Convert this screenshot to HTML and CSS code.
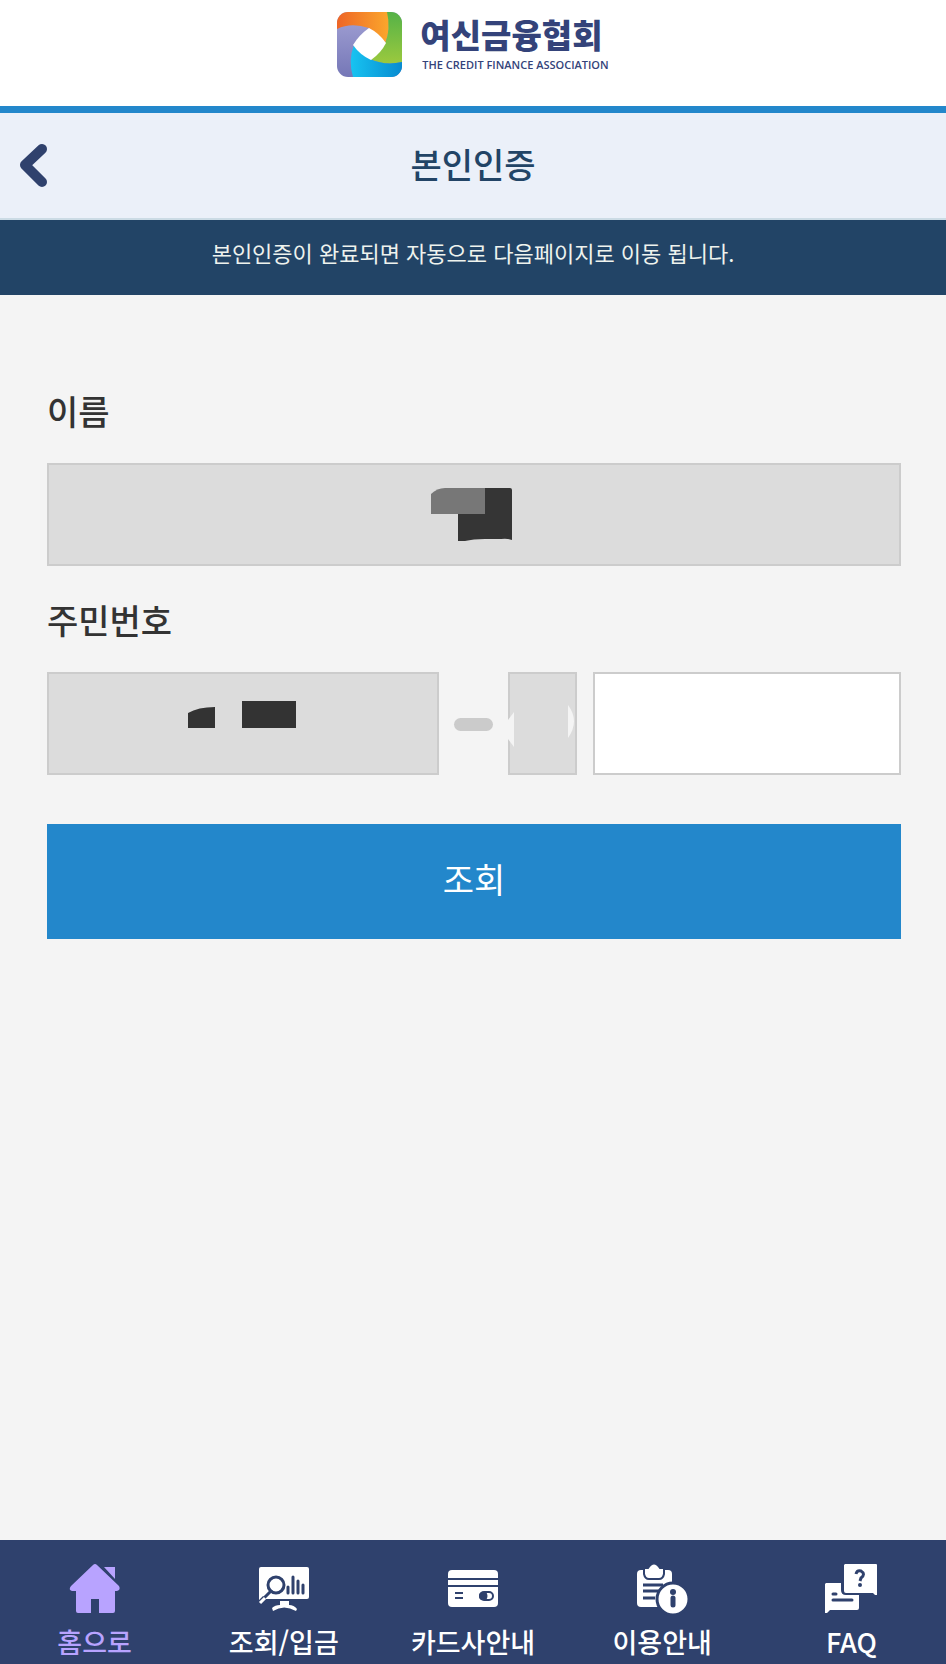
FILE: index.html
```html
<!DOCTYPE html>
<html lang="ko">
<head>
<meta charset="utf-8">
<meta name="viewport" content="width=device-width, initial-scale=1">
<title>본인인증 - 여신금융협회</title>
<link rel="stylesheet" href="styles.css">
</head>
<body>
<header class="site-header">
  <a class="brand" href="#">
    <svg class="brand-mark" viewBox="0 0 65 65" aria-hidden="true">
      <defs>
        <clipPath id="mark"><rect width="65" height="65" rx="11"/></clipPath>
        <linearGradient id="orange"><stop offset="0" stop-color="#ee6526"/><stop offset="1" stop-color="#fba72c"/></linearGradient>
        <linearGradient id="green" x2="0" y2="1"><stop offset="0" stop-color="#55b247"/><stop offset="1" stop-color="#9bc93e"/></linearGradient>
        <linearGradient id="blue"><stop offset="0" stop-color="#18c3f1"/><stop offset="1" stop-color="#078bd0"/></linearGradient>
        <linearGradient id="violet" x2="0" y2="1"><stop offset="0" stop-color="#a3a2d5"/><stop offset="1" stop-color="#7577b7"/></linearGradient>
      </defs>
      <g clip-path="url(#mark)">
        <rect width="65" height="65" fill="url(#violet)"/>
        <path d="M0 0H51Q54 17 48 32L32 16Q14 10 0 17Z" fill="url(#orange)"/>
        <path d="M50 0H65V50Q48 54 33 47L48 32Q54 17 50 0Z" fill="url(#green)"/>
        <path d="M16 65Q11 48 17 33L33 47Q48 54 65 50V65Z" fill="url(#blue)"/>
        <path d="M32 16Q42 21 49 31Q44 41 34 48Q23 43 16 33Q22 23 32 16Z" fill="#fff"/>
      </g>
    </svg>
    <span class="brand-text">
      <span class="brand-name">여신금융협회</span>
      <span class="brand-sub">THE CREDIT FINANCE ASSOCIATION</span>
    </span>
  </a>
</header>

<div class="title-bar">
  <button class="back" type="button" aria-label="뒤로">
    <svg viewBox="0 0 30 46" aria-hidden="true"><path d="M23 6L6 22L23 39" fill="none" stroke="#2f416d" stroke-width="10" stroke-linecap="round" stroke-linejoin="round"/></svg>
  </button>
  <h1>본인인증</h1>
</div>
<p class="notice">본인인증이 완료되면 자동으로 다음페이지로 이동 됩니다.</p>

<main>
  <form class="form">
    <label for="name">이름</label>
    <div class="field">
      <input id="name" type="text" readonly>
      <svg class="mask mask-name" viewBox="0 0 82 54" aria-hidden="true">
        <path d="M0 6Q6 0 14 0H54V26H0Z" fill="#777"/>
        <path d="M54 0H79Q81 0 81 2V52Q76 50 70 51H54Q42 51 34 53H27V26H54Z" fill="#353535"/>
      </svg>
    </div>
    <label for="birth">주민번호</label>
    <div class="id-row">
      <div class="field birth">
        <input id="birth" type="text" readonly>
        <svg class="mask mask-birth" viewBox="0 0 108 27" aria-hidden="true">
          <path d="M0 12Q10 6 27 6V27H0ZM54 0H108V27H54Z" fill="#333"/>
        </svg>
      </div>
      <span class="dash"></span>
      <div class="field digit">
        <input type="text" aria-label="주민번호 뒤 첫째 자리" readonly>
        <svg class="mask mask-digit" viewBox="0 0 69 42" aria-hidden="true">
          <path d="M0 15L6 7V42L0 34ZM60 0Q72 16 60 33Z" fill="#f4f4f4"/>
        </svg>
      </div>
      <div class="field rest"><input type="password" aria-label="주민번호 뒤 나머지 자리"></div>
    </div>
    <button class="submit" type="button">조회</button>
  </form>
</main>

<nav class="tabs">
  <a class="active" href="#">
    <svg viewBox="0 0 54 54" aria-hidden="true" fill="currentColor">
      <path d="M25 3Q27 1 29 3L51 24Q53 28 49 29H47V49Q47 51 45 51H31V37H23V51H10Q8 51 8 49V29H4Q0 28 3 24ZM36 5H47V17Z"/>
    </svg>
    <span>홈으로</span>
  </a>
  <a href="#">
    <svg viewBox="0 0 54 54" aria-hidden="true" fill="none">
      <path d="M4 5H50Q52 5 52 7V35Q52 37 50 37H9L2 30V7Q2 5 4 5Z" fill="#fff"/>
      <path d="M2 28V38L8 32ZM23 39H32V43Q37 43 40 47L39 49Q27 42 16 49L15 46Q18 43 23 43Z" fill="#fff"/>
      <circle cx="19" cy="23" r="8" stroke="#2f416d" stroke-width="3"/>
      <path d="M14 29L5 38M31 25V31M36 15V31M41 19V31M46 23V31" stroke="#2f416d" stroke-width="3" stroke-linecap="round"/>
      <path d="M3 41L8 36" stroke="#fff" stroke-width="3"/>
    </svg>
    <span>조회/입금</span>
  </a>
  <a href="#">
    <svg viewBox="0 0 54 54" aria-hidden="true" fill="none">
      <rect x="2" y="8" width="50" height="37" rx="4" fill="#fff"/>
      <path d="M2 17H52M2 24H52M9 31H17M9 36H17" stroke="#2f416d" stroke-width="2"/>
      <circle cx="37" cy="34" r="4" fill="#2f416d"/>
      <rect x="34" y="30" width="13" height="8" rx="4" stroke="#2f416d" stroke-width="2"/>
      <path d="M37 30H40Q43 34 40 38H37Z" fill="#2f416d"/>
    </svg>
    <span>카드사안내</span>
  </a>
  <a href="#">
    <svg viewBox="0 0 54 54" aria-hidden="true" fill="none">
      <rect x="2" y="8" width="35" height="37" rx="4" fill="#fff"/>
      <path d="M9 6H13Q19-3 25 6H29V12Q28 17 24 17H14Q10 17 9 12Z" fill="#fff" stroke="#2f416d" stroke-width="2"/>
      <path d="M8 23H28M8 29H24M8 36H20" stroke="#2f416d" stroke-width="3"/>
      <circle cx="38" cy="37" r="16" fill="#fff" stroke="#2f416d" stroke-width="3"/>
      <circle cx="38" cy="30" r="3" fill="#2f416d"/>
      <path d="M38 36V43" stroke="#2f416d" stroke-width="5" stroke-linecap="round"/>
    </svg>
    <span>이용안내</span>
  </a>
  <a href="#">
    <svg viewBox="0 0 54 54" aria-hidden="true" fill="none">
      <path d="M2 21H17V28Q17 33 22 33H35V46Q35 48 33 48H6L3 51H1V22Z" fill="#fff"/>
      <path d="M9 32H12M9 38H28" stroke="#2f416d" stroke-width="3" stroke-linecap="round"/>
      <path d="M21 2H52Q53 2 53 3V33H51L49 31H22Q20 31 20 29V3Z" fill="#fff"/>
      <path d="M32 12Q33 8 37 9Q42 12 37 16L36 19" stroke="#2f416d" stroke-width="3"/>
      <circle cx="36" cy="23" r="2" fill="#2f416d"/>
    </svg>
    <span>FAQ</span>
  </a>
</nav>
</body>
</html>
```

FILE: styles.css
```css
* { box-sizing: border-box; }

body {
  margin: 0;
  min-height: 100vh;
  display: flex;
  flex-direction: column;
  background: #f4f4f4;
  color: #333;
  font-family: "Noto Sans CJK KR", sans-serif;
}

a { color: inherit; text-decoration: none; }
button, input { font: inherit; border-radius: 0; }

.site-header {
  display: flex;
  justify-content: center;
  padding: 12px 0 29px;
  background: #fff;
  border-bottom: 7px solid #2387cb;
}
.brand { display: flex; gap: 18px; color: #34437a; }
.brand-mark { width: 65px; height: 65px; }
.brand-text { display: flex; flex-direction: column; }
.brand-name { font-size: 33px; line-height: 44px; font-weight: 900; }
.brand-sub {
  padding-left: 2px;
  font-family: "Open Sans", sans-serif;
  font-size: 11px;
  line-height: 18px;
  font-weight: 600;
}

.title-bar {
  display: grid;
  grid-template-columns: 66px 1fr 66px;
  align-items: center;
  height: 107px;
  background: #ebf0f9;
  border-bottom: 2px solid #cbdbe5;
}
.title-bar h1 {
  margin: 0;
  padding-bottom: 4px;
  color: #224466;
  font-size: 34px;
  line-height: 48px;
  font-weight: 500;
  text-align: center;
}
.back {
  display: flex;
  padding: 0 19px;
  border: 0;
  background: none;
}
.back svg { flex: none; width: 30px; height: 46px; }

.notice {
  margin: 0;
  padding: 16px 16px 27px;
  background: #224466;
  color: #eef3ee;
  font-size: 22px;
  line-height: 32px;
  text-align: center;
}

main { flex: 1; padding: 92px 45px 40px 47px; }
.form { display: flex; flex-direction: column; }
.form label { font-size: 34px; line-height: 48px; margin-bottom: 28px; font-weight: 500; }

.field { position: relative; margin-bottom: 30px; }
.field input {
  display: block;
  width: 100%;
  height: 103px;
  padding: 0 20px;
  border: 2px solid #ccc;
  background: #fff;
  font-size: 34px;
}
.field input:read-only { background: #dcdcdc; text-align: center; }

.mask { position: absolute; }
.mask-name { left: 45%; top: 25px; width: 82px; height: 54px; }
.mask-birth { left: 36%; top: 29px; width: 108px; height: 27px; }
.mask-digit { left: 0; top: 33px; width: 69px; height: 42px; }

.id-row { display: flex; align-items: center; margin-bottom: 49px; }
.id-row .field { margin-bottom: 0; }
.birth { flex: 393; }
.rest { flex: 308; margin-left: 16px; }
.digit { width: 69px; }
.dash { width: 39px; height: 13px; margin: 2px 15px 0; border-radius: 7px; background: #cbcbcb; }

.submit {
  height: 115px;
  padding: 0 0 6px;
  border: 0;
  background: #2387cb;
  color: #fff;
  font-size: 34px;
}

.tabs {
  display: grid;
  grid-template-columns: repeat(5, 1fr);
  padding: 22px 0 4px;
  background: #2f416d;
  color: #fff;
}
.tabs a {
  display: flex;
  flex-direction: column;
  align-items: center;
  gap: 8px;
  font-size: 27px;
  line-height: 36px;
  font-weight: 500;
}
.tabs svg { width: 54px; height: 54px; }
.tabs .active { color: #b8a3ff; }
```
